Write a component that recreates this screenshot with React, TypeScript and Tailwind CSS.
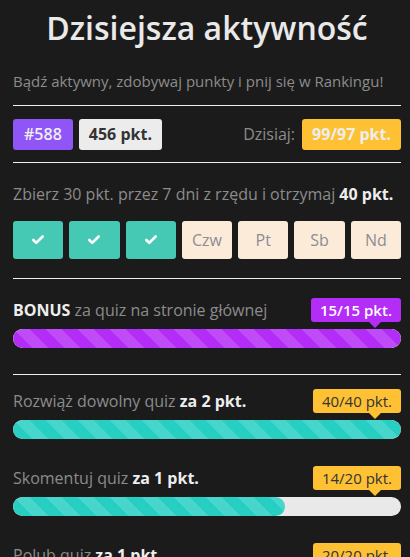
import { Check } from 'lucide-react';

const days = [
  { label: 'Pn', done: true },
  { label: 'Wt', done: true },
  { label: 'Śr', done: true },
  { label: 'Czw', done: false },
  { label: 'Pt', done: false },
  { label: 'Sb', done: false },
  { label: 'Nd', done: false },
];

const tasks = [
  { text: 'Rozwiąż dowolny quiz', bold: 'za 2 pkt.', value: 40, max: 40 },
  { text: 'Skomentuj quiz', bold: 'za 1 pkt.', value: 14, max: 20 },
  { text: 'Polub quiz', bold: 'za 1 pkt.', value: 20, max: 20 },
];

const stripes =
  'linear-gradient(45deg, rgba(255,255,255,0.15) 25%, transparent 25%, transparent 50%, rgba(255,255,255,0.15) 50%, rgba(255,255,255,0.15) 75%, transparent 75%, transparent)';

function Badge({ label, tone }: { label: string; tone: 'purple' | 'yellow' }) {
  const bg = tone === 'purple' ? 'bg-[#b42df7] text-white font-semibold' : 'bg-[#fdc133] text-[#333]';
  const arrow = tone === 'purple' ? 'border-t-[#b42df7]' : 'border-t-[#fdc133]';
  return (
    <div className="relative">
      <span className={`block rounded-[3px] px-[9px] h-[24px] leading-[24px] text-[15px] ${bg}`}>{label}</span>
      <span className={`absolute right-[20px] top-full w-0 h-0 border-x-[6px] border-x-transparent border-t-[6px] ${arrow}`} />
    </div>
  );
}

function Bar({ pct, color }: { pct: number; color: string }) {
  return (
    <div className="h-[19px] rounded-full bg-[#e9e9e9] overflow-hidden">
      <div
        className={`h-full rounded-full ${color}`}
        style={{ width: `${pct}%`, backgroundImage: stripes, backgroundSize: '32px 32px' }}
      />
    </div>
  );
}

export default function App() {
  return (
    <div className="h-[557px] overflow-hidden bg-[#1b1b1b] pl-[13px] pr-[9px] font-['Open_Sans',sans-serif] text-[#8c8c8c]">
      <h1 className="pt-[8px] text-center text-[32px] leading-[40px] font-semibold text-[#e9e9e9]">
        Dzisiejsza aktywność
      </h1>
      <p className="mt-[23px] text-[15px] leading-[20px]">Bądź aktywny, zdobywaj punkty i pnij się w Rankingu!</p>

      <div className="mt-[14px] border-t border-[#eee]" />
      <div className="flex items-center h-[56px]">
        <span className="rounded-[3px] bg-[#8f55f7] px-[11px] h-[31px] leading-[31px] text-[16px] font-semibold text-[#eee]">#588</span>
        <span className="ml-[6px] rounded-[3px] bg-[#ececec] px-[10px] h-[31px] leading-[31px] text-[16px] font-bold text-[#333]">456 pkt.</span>
        <span className="ml-auto text-[16px]">Dzisiaj:</span>
        <span className="ml-[7px] rounded-[3px] bg-[#fdc133] px-[10px] h-[31px] leading-[31px] text-[16px] font-bold text-[#eee]">99/97 pkt.</span>
      </div>
      <div className="border-t border-[#eee]" />

      <p className="mt-[20px] text-[16px] leading-[22px]">
        Zbierz 30 pkt. przez 7 dni z rzędu i otrzymaj <b className="font-bold text-[#eee]">40 pkt.</b>
      </p>
      <div className="mt-[16px] grid grid-cols-7 gap-[6px]">
        {days.map((d) =>
          d.done ? (
            <div key={d.label} className="h-[38px] rounded-[3px] bg-[#46c9b4] flex items-center justify-center">
              <Check className="w-[14px] h-[14px] text-white" strokeWidth={4.5} />
            </div>
          ) : (
            <div key={d.label} className="h-[38px] rounded-[3px] bg-[#fdebd9] flex items-center justify-center text-[16px] text-[#8b8d94]">
              {d.label}
            </div>
          )
        )}
      </div>
      <div className="mt-[19px] border-t border-[#eee]" />

      <div className="mt-[19px] flex items-center justify-between">
        <span className="text-[16px]">
          <b className="font-bold text-[#eee]">BONUS</b> za quiz na stronie głównej
        </span>
        <Badge label="15/15 pkt." tone="purple" />
      </div>
      <div className="mt-[7px]">
        <Bar pct={100} color="bg-[#b42df7]" />
      </div>
      <div className="mt-[26px] border-t border-[#eee]" />

      {tasks.map((t, i) => (
        <div key={t.text} className={i === 0 ? 'mt-[14px]' : 'mt-[27px]'}>
          <div className="flex items-center justify-between">
            <span className="text-[16px]">
              {t.text} <b className="font-bold text-[#eee]">{t.bold}</b>
            </span>
            <Badge label={`${t.value}/${t.max} pkt.`} tone="yellow" />
          </div>
          <div className="mt-[7px]">
            <Bar pct={(t.value / t.max) * 100} color="bg-[#27cfc2]" />
          </div>
        </div>
      ))}
    </div>
  );
}
